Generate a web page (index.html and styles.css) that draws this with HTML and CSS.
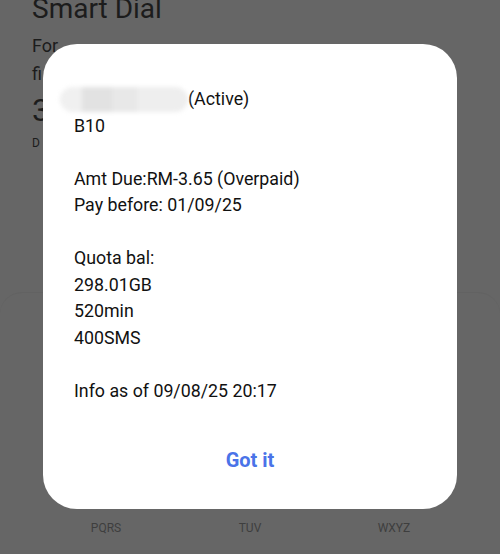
FILE: index.html
```html
<!DOCTYPE HTML>
<html>
<head>
    <meta charset="utf-8">
    <title>Smart Dial</title>
    <meta name="viewport" content="width=device-width, initial-scale=1">
    <link rel="stylesheet" href="styles.css">
</head>
<body>

<div id="page">
    <div class="head">
        <h1>Smart Dial</h1>
        <p>For</p>
        <p>fi</p>
        <div class="big">3</div>
        <div class="small">D</div>
    </div>
    <div class="keypad">
        <div class="keys">
            <span>PQRS</span>
            <span>TUV</span>
            <span>WXYZ</span>
        </div>
    </div>
</div>

<div id="dialog">
    <div class="msg">
        <div class="line"><span class="blur"><i></i><i></i><i></i><i></i></span>(Active)</div>
        <div class="line">B10</div>
        <div class="line"></div>
        <div class="line">Amt Due:RM-3.65 (Overpaid)</div>
        <div class="line">Pay before: 01/09/25</div>
        <div class="line"></div>
        <div class="line">Quota bal:</div>
        <div class="line">298.01GB</div>
        <div class="line">520min</div>
        <div class="line">400SMS</div>
        <div class="line"></div>
        <div class="line">Info as of 09/08/25 20:17</div>
    </div>
    <div class="btn" role="button">Got it</div>
</div>

</body>
</html>
```

FILE: styles.css
```css
body {
    margin:0;
    font-family:Roboto, "Noto Sans", sans-serif;
    background:#666666;
    color:#1c1c1c;
    width:500px;
    height:554px;
    overflow:hidden;
    position:relative;
}
#page {
    display:flex;
    flex-direction:column;
    height:554px;
}
.head {
    padding:0 0 0 32px;
    height:292px;
}
.head h1 {
    margin:-11px 0 0 0;
    font-size:28px;
    font-weight:400;
    line-height:40px;
}
.head p {
    margin:0;
    font-size:18px;
    line-height:28px;
}
.head p:first-of-type {margin-top:3px;}
.head .big {
    font-size:32px;
    line-height:40px;
    margin-top:2px;
}
.head .small {
    font-size:12px;
    line-height:16px;
    margin-top:5px;
}
.keypad {
    flex:1;
    border-top:1px solid #626262;
    border-radius:22px 22px 0 0;
    display:flex;
    flex-direction:column;
    justify-content:flex-end;
}
.keys {
    display:flex;
    justify-content:space-around;
    padding:0 34px 19px 34px;
}
.keys span {
    width:100px;
    text-align:center;
    font-size:12px;
    color:#3e3e3e;
}

#dialog {
    position:absolute;
    left:43px;
    top:44px;
    width:414px;
    height:465px;
    background:#fff;
    border-radius:34px;
    box-sizing:border-box;
    padding:42px 31px 0 31px;
    display:flex;
    flex-direction:column;
}
.msg {
    font-size:17.8px;
    line-height:26.5px;
    color:#111;
}
.line {height:26.5px; white-space:nowrap; display:flex; align-items:center;}
.blur {
    display:inline-flex;
    width:128px;
    height:25px;
    margin-left:-14px;
    border-radius:13px;
    overflow:hidden;
    filter:blur(2px);
}
.blur i {display:block; height:100%;}
.blur i:nth-child(1) {width:22px; background:#f0f0f0;}
.blur i:nth-child(2) {width:30px; background:#e2e2e2;}
.blur i:nth-child(3) {width:25px; background:#e8e8e8;}
.blur i:nth-child(4) {flex:1; background:#eeeeee;}
.btn {
    margin-top:41px;
    text-align:center;
    font-size:20px;
    font-weight:700;
    line-height:30px;
    color:#4a73e8;
}
```
